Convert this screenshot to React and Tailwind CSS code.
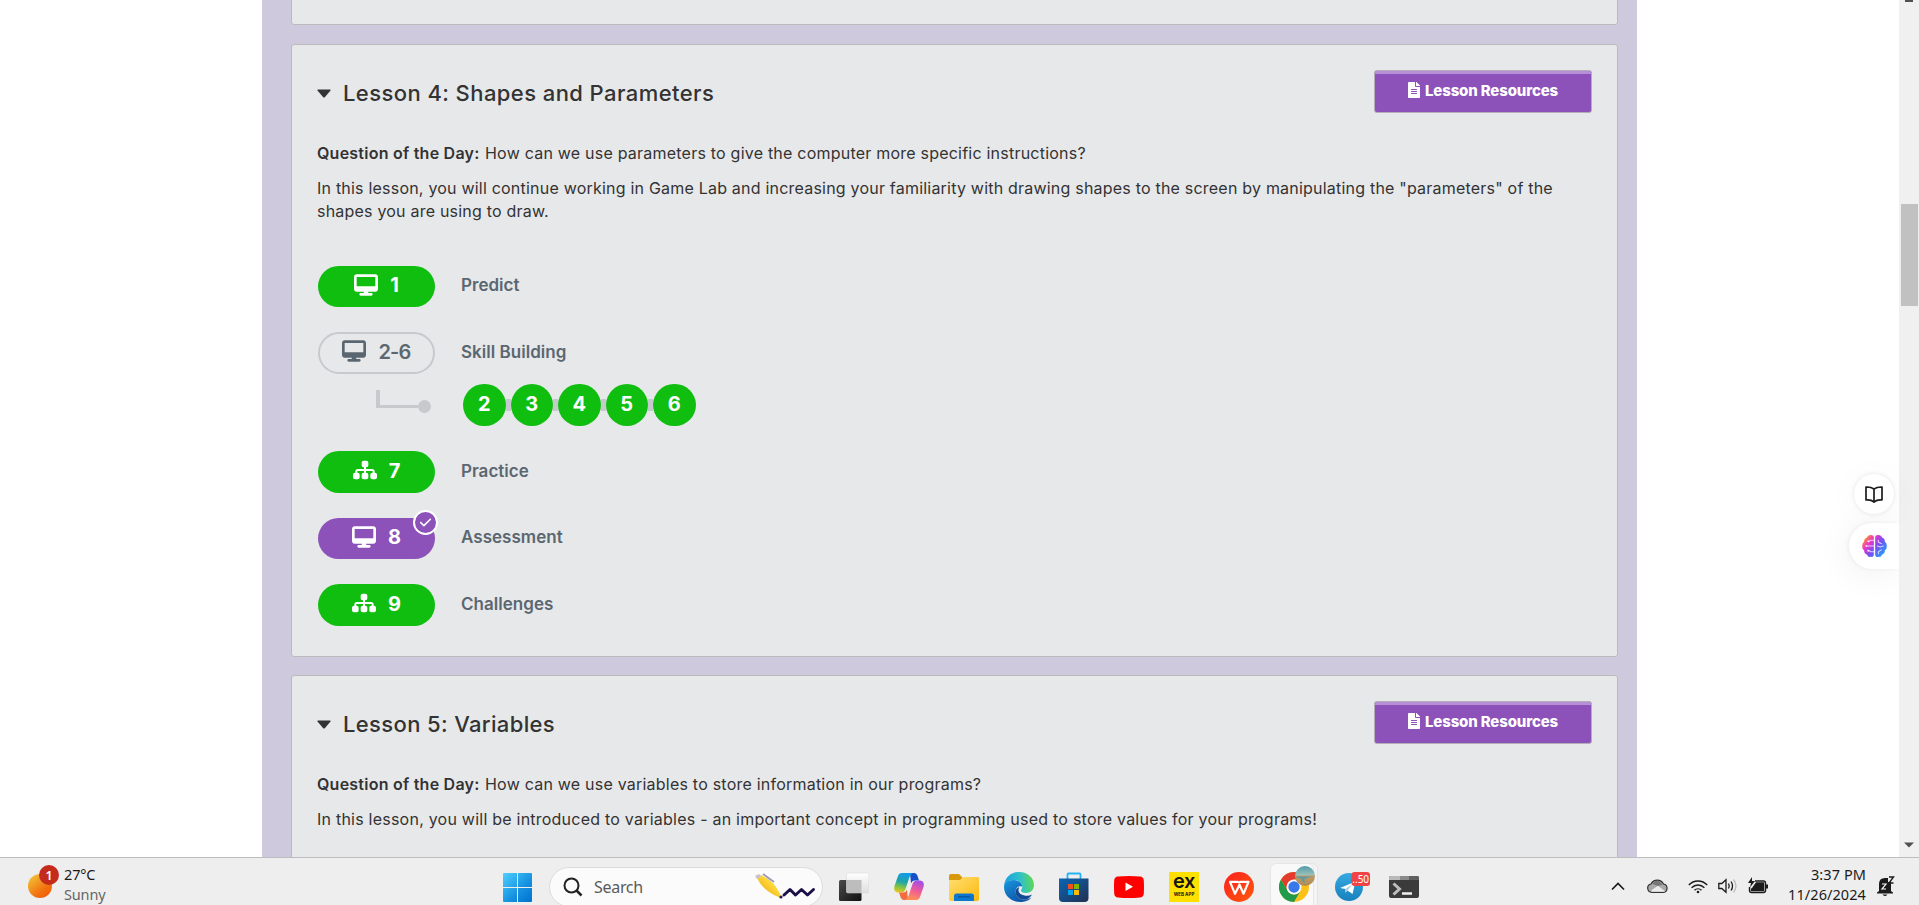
import React from "react";
import { FaDesktop, FaSitemap, FaCheck } from "react-icons/fa6";
import { FaFileAlt } from "react-icons/fa";

const pillIcons = { desktop: FaDesktop, sitemap: FaSitemap };

function Pill({ icon, label, tone, height, assessed }) {
  const Icon = pillIcons[icon];
  return (
    <div className={`relative flex w-[117px] items-center justify-center gap-3 rounded-full pb-1 text-[20px] leading-none ${height} ${tone}`}>
      <Icon className="size-6 shrink-0" />
      <span className="pt-px">{label}</span>
      {assessed && (
        <span className="absolute -right-[3px] -top-2 flex size-[25px] items-center justify-center rounded-full border-[2.5px] border-white bg-[#8c52ba]">
          <FaCheck className="size-[13px] text-white" />
        </span>
      )}
    </div>
  );
}

const green = "bg-[#0fbe0f] font-bold text-white";
const purple = "bg-[#8c52ba] font-bold text-white";
const outline = "border-2 border-[#c6cacd] font-semibold tracking-[-0.8px] text-[#5b6770]";

function LevelRow({ children, name, spacing }) {
  return (
    <div className={`flex items-center gap-[26px] pl-px ${spacing}`}>
      {children}
      <span className="pb-[2px] text-[17px] font-semibold leading-none tracking-[0.03px] text-[#5b6770]">{name}</span>
    </div>
  );
}

function Lesson({ title, titleTrack, question, children, size }) {
  return (
    <section className={`shrink-0 rounded-[3px] border border-[#bbb] bg-[#e7e8ea] px-[25px] pt-[25px] text-[#333] ${size}`}>
      <div className="flex h-[43px] items-start justify-between">
        <h2 className={`flex items-center gap-3 pt-[9px] text-[22px] font-medium leading-[28px] ${titleTrack}`}>
          <svg viewBox="0 0 14 9" className="h-[9px] w-[14px]">
            <path d="M1 .5h12q1.200 0 .5 1L8 7.900q-1 1-2 0L.5 1.500Q-.2.500 1 .5z" fill="currentColor" />
          </svg>
          {title}
        </h2>
        <div className="flex h-[43px] w-[218px] flex-col rounded-[3px] border border-[#b5aeb9] bg-[#8c52ba]">
          <div className="h-[3px] rounded-t-[2px] bg-[#b78fd6]" />
          <div className="flex flex-1 items-center justify-center gap-[5px] pb-[6px] text-[15px] font-extrabold leading-none tracking-[-0.15px] text-white">
            <FaFileAlt className="h-4 w-3" />
            Lesson Resources
          </div>
        </div>
      </div>
      <p className="mt-[29px] whitespace-nowrap text-[16px] leading-[23px] tracking-[0.22px]">
        <strong className="inline-block w-[168px] font-semibold tracking-[0.24px]">Question of the Day: </strong>
        {question}
      </p>
      {children}
    </section>
  );
}

const AppSlot = ({ children }) => <div className="flex size-[30px] shrink-0 items-center justify-center">{children}</div>;

function Taskbar() {
  return (
    <footer className="flex h-12 shrink-0 overflow-hidden border-t border-[#bdbdbd] bg-[#eeeeee] font-['Noto_Sans',sans-serif]">
      <div className="flex w-[503px] pl-7 pt-[7px]">
        <svg viewBox="0 0 32 34" className="h-[34px] w-8 shrink-0">
          <defs>
            <linearGradient id="sun" x1="0" y1="0" x2=".8" y2="1"><stop stopColor="#f2cf3c" /><stop offset=".7" stopColor="#f2720f" /><stop offset="1" stopColor="#f05a05" /></linearGradient>
          </defs>
          <circle cx="12" cy="21" r="12" fill="url(#sun)" />
          <circle cx="21" cy="10" r="10" fill="#c42b1c" />
          <text x="21" y="14.500" textAnchor="middle" fontSize="12.500" fontWeight="600" fill="#fff">1</text>
        </svg>
        <div className="-mt-px ml-1 text-[14.500px] leading-5 tracking-[-0.15px]">
          <div className="text-[#1b1b1b]">27°C</div>
          <div className="text-[#666]">Sunny</div>
        </div>
      </div>

      <div className="flex pt-[14px]">
        <svg viewBox="0 0 29 29" className="mt-px size-[29px]">
          <defs><linearGradient id="win" x1="0" y1="0" x2="1" y2="1"><stop stopColor="#4cd0ff" /><stop offset=".6" stopColor="#1590e0" /><stop offset="1" stopColor="#0072cf" /></linearGradient></defs>
          <path d="M1 0h13v14H0V1q0-1 1-1zM15 0h13q1 0 1 1v13H15zM0 15h14v14H1q-1 0-1-1zM15 15h14v13q0 1-1 1H15z" fill="url(#win)" />
        </svg>
        <div className="-mt-[5px] ml-[17px] flex h-[40px] w-[274px] shrink-0 items-start rounded-full border border-[#dcdcdc] bg-[#fbfbfb] pl-[13px] pt-[9px]">
          <svg viewBox="0 0 20 20" className="size-5" fill="none" stroke="#222" strokeWidth="2">
            <circle cx="8.500" cy="8.500" r="7" /><path d="M13.500 13.500l5 5" strokeWidth="2.500" />
          </svg>
          <span className="-mt-px ml-[11px] text-[16px] leading-[22px] tracking-[-0.3px] text-[#5a5a5a]">Search</span>
          <svg viewBox="0 0 62 26" className="-mt-1 ml-auto mr-[5px] h-[26px] w-[62px]">
            <defs><linearGradient id="pen" x1="0" y1="1" x2="1" y2="0"><stop stopColor="#e09a08" /><stop offset=".6" stopColor="#ffd83a" /><stop offset="1" stopColor="#e0a010" /></linearGradient></defs>
            <path d="M2 5L6 2Q20 8 26 23l-1.500 1.500Q8 18 2 5z" fill="url(#pen)" />
            <path d="M0 3l4-2 2 2-4 3z" fill="#c5bfd8" />
            <path d="M8 1l11 8" stroke="#9d97bd" strokeWidth="1.800" />
            <circle cx="26" cy="24" r="1.600" fill="#2a1b52" />
            <path d="M29 22l6-5.500 5.500 5.500 6-5.500 6 5.500 6-5.500" fill="none" stroke="#1d1147" strokeWidth="3" strokeLinejoin="round" strokeLinecap="round" />
          </svg>
        </div>

        <div className="ml-4 flex gap-[25px]">
          <AppSlot>
            <svg viewBox="0 0 30 30">
              <defs>
                <linearGradient id="tv" x1="0" y1="0" x2="1" y2="1"><stop stopColor="#4a4a4a" /><stop offset="1" stopColor="#111" /></linearGradient>
                <linearGradient id="tl" x1="0" y1="0" x2="0" y2="1"><stop stopColor="#fff" /><stop offset="1" stopColor="#dedede" /></linearGradient>
              </defs>
              <rect y="8" width="22.500" height="21" rx="1.500" fill="url(#tv)" />
              <rect x="7.500" y="1" width="22.300" height="20" rx="1.500" fill="url(#tl)" stroke="#d6d6d6" strokeWidth=".5" />
              <path d="M7.500 8h15v13h-13.500q-1.500 0-1.500-1.500z" fill="#bdbdbd" />
            </svg>
          </AppSlot>
          <AppSlot>
            <svg viewBox="0 0 30 30">
              <defs>
                <linearGradient id="ca" x1=".5" y1="0" x2=".3" y2="1"><stop stopColor="#109be8" /><stop offset=".45" stopColor="#21a5a8" /><stop offset=".75" stopColor="#87c53f" /><stop offset="1" stopColor="#ecc520" /></linearGradient>
                <linearGradient id="cb" x1=".7" y1="0" x2=".4" y2="1"><stop stopColor="#a24bea" /><stop offset=".5" stopColor="#ee5a9a" /><stop offset="1" stopColor="#ff9352" /></linearGradient>
              </defs>
              <path d="M16 1h4q2.500 0 3.500 3l1.500 4.500h-4q-3 0-4 3z" fill="#174ec9" />
              <path d="M8 1h11q-2.500 1-3.500 4l-4 12q-1.200 3.500-4.500 3.500H4Q-1 20 .5 14L4 4q1-3 4-3z" fill="url(#ca)" />
              <path d="M14 28h-4q-2.500 0-3.500-3L5 20.500h4q3 0 4-3z" fill="#f26d42" />
              <path d="M22 28H11q2.500-1 3.500-4l4-12q1.200-3.500 4.500-3.500h3q5 .5 3.500 6.500L26 25q-1 3-4 3z" fill="url(#cb)" />
            </svg>
          </AppSlot>
          <AppSlot>
            <svg viewBox="0 0 30 30">
              <defs><linearGradient id="fo" x1="0" y1="0" x2="1" y2="1"><stop stopColor="#ffdf73" /><stop offset="1" stopColor="#fcb90d" /></linearGradient></defs>
              <path d="M0 4q0-2 2-2h8l3 3v5H0z" fill="#d9970a" />
              <path d="M0 8h11l3-3h15q1 0 1 1v21q0 2-2 2H2q-2 0-2-2z" fill="url(#fo)" />
              <path d="M5 29v-5q0-2.500 2.500-2.500h15Q25 21.500 25 24v5z" fill="#0b78d0" />
              <path d="M9 24.800h12.500" stroke="#07529b" strokeWidth="1.200" />
            </svg>
          </AppSlot>
          <AppSlot>
            <svg viewBox="0 0 30 30">
              <defs>
                <linearGradient id="ea" x1="0" y1=".4" x2="1" y2=".3"><stop stopColor="#1c9fe0" /><stop offset=".55" stopColor="#2fc2c9" /><stop offset="1" stopColor="#63d94a" /></linearGradient>
                <linearGradient id="eb" x1="0" y1="0" x2=".7" y2="1"><stop stopColor="#1897dd" /><stop offset="1" stopColor="#0d4fa4" /></linearGradient>
              </defs>
              <path d="M0 14C1 5 7 0 15 0c9 0 15 6 15 13 0 5-3.500 8-8 8-3.500 0-5-1.200-5-2.500 0-1 1.300-1.500 1.300-4C18.300 11 15 8 10 8 5 8 1 11 0 14z" fill="url(#ea)" />
              <path d="M0 15C0 11 4 8 9.500 8c5 0 8.800 3 8.800 6.500h-.5c-4-1-6.300 2-6.300 5 0 5 5 8.500 10 8 2.500-.3 4-1 6-2C24.500 29 20 30 16 30 7 30 0 23.500 0 15z" fill="url(#eb)" />
              <path d="M11.500 19c-.5 5 4 8.800 10 8.500 3-.3 5-2.500 6.500-5-2 1-4 1.500-6 1.300-6-.5-9-4-6.800-8.600-2 .5-3.500 2-3.700 3.800z" fill="#134992" />
            </svg>
          </AppSlot>
          <AppSlot>
            <svg viewBox="0 0 30 30">
              <defs><linearGradient id="st" x1="0" y1="0" x2="1" y2="1"><stop stopColor="#0a66b8" /><stop offset="1" stopColor="#22304f" /></linearGradient></defs>
              <path d="M8.500 8V2.500q0-1 1-1h11q1 0 1 1V8" fill="none" stroke="#25b3f4" strokeWidth="1.800" />
              <path d="M0 6.500h29.500V26q0 4-4 4H4q-4 0-4-4z" fill="url(#st)" />
              <path d="M9 12h5v5H9z" fill="#f25022" /><path d="M15 12h5v5h-5z" fill="#7fba00" /><path d="M9 18h5v5H9z" fill="#00a4ef" /><path d="M15 18h5v5h-5z" fill="#ffb900" />
            </svg>
          </AppSlot>
          <AppSlot>
            <svg viewBox="0 0 30 30"><path d="M4 4.500q11-1 22 0 3.500.3 3.800 4 .4 6.500 0 13-.3 3.700-3.800 4-11 1-22 0-3.500-.3-3.800-4-.4-6.500 0-13 .3-3.700 3.800-4z" fill="#f00" /><path d="M11.500 10.500l7.500 4.300-7.500 4.300z" fill="#fff" /></svg>
          </AppSlot>
          <AppSlot>
            <div className="flex size-[30px] flex-col items-center bg-[#ffe000] font-['Inter',sans-serif] text-[#141414]">
              <span className="mt-px text-[20px] font-semibold leading-[17px] tracking-tight">ex</span>
              <span className="mt-px whitespace-nowrap text-[4.500px] font-bold leading-[7px]">WEB APP</span>
            </div>
          </AppSlot>
          <AppSlot>
            <svg viewBox="0 0 30 30">
              <defs><linearGradient id="wp" x1="0" y1="0" x2="1" y2="1"><stop stopColor="#fb1f1f" /><stop offset="1" stopColor="#ff5a0c" /></linearGradient></defs>
              <circle cx="15" cy="15" r="15" fill="url(#wp)" />
              <path d="M14.500 9.800H6l5 12 4.500-9 4 9 5-12h-8q-1.500 0-1 1.500" fill="none" stroke="#fff" strokeWidth="2.200" strokeLinejoin="round" />
            </svg>
          </AppSlot>
          <AppSlot>
            <div className="relative size-[30px]">
              <div className="absolute -left-[5px] -top-[9px] h-[46px] w-[44px] rounded-md border border-[#e4e4e4] bg-[#f4f4f4]" />
              <div className="absolute -left-[9px] -top-[9px] h-[46px] w-[44px] rounded-md border border-[#e6e6e6] bg-[#f9f9f9]" />
              <svg viewBox="0 0 36 36" className="absolute left-0 -top-[6px] size-9">
                <defs>
                  <linearGradient id="av" x1="0" y1="0" x2="0" y2="1"><stop stopColor="#4f9cab" /><stop offset=".45" stopColor="#9cc0b8" /><stop offset=".5" stopColor="#c19b66" /><stop offset="1" stopColor="#b08a55" /></linearGradient>
                </defs>
                <circle cx="15" cy="21" r="15" fill="#fbc116" />
                <path d="M2 13.500A15 15 0 0 1 28 13.500H15l-6.500 11.200z" fill="#e33b2e" />
                <path d="M2 13.500l6.500 11.200A7.500 7.500 0 0 0 21.500 24.700L15 36A15 15 0 0 1 2 13.500z" fill="#219a4b" />
                <circle cx="15" cy="21" r="7.500" fill="#fff" /><circle cx="15" cy="21" r="5.700" fill="#3878ea" />
                <circle cx="26" cy="10" r="10" fill="url(#av)" />
                <path d="M17.500 10.500h18q-6 0-10 2.500-1 2 1 4-3-1-4-3 1-2-5-2z" fill="#5e9aa2" />
              </svg>
            </div>
          </AppSlot>
          <AppSlot>
            <svg viewBox="0 0 30 30" className="overflow-visible">
              <defs><linearGradient id="tg" x1="0" y1="0" x2="0" y2="1"><stop stopColor="#36a9e0" /><stop offset="1" stopColor="#1781bd" /></linearGradient></defs>
              <circle cx="15" cy="15" r="14" fill="url(#tg)" />
              <path d="M6 16L21.500 9.500 18.500 22l-5-3.500-2 2V17z" fill="#fff" /><path d="M11.500 17l7-5-5 6.500-2 2z" fill="#a8cce0" />
              <rect x="17.500" width="18.500" height="14" rx="3" fill="#f04444" />
              <text x="26.700" y="10.800" textAnchor="middle" fontSize="10" fill="#fff">..50</text>
            </svg>
          </AppSlot>
          <AppSlot>
            <svg viewBox="0 0 30 30">
              <path d="M2 4h26q2 0 2 2v18q0 2-2 2H2q-2 0-2-2V6q0-2 2-2z" fill="#3b3b3b" />
              <path d="M2 4h9v4H0V6q0-2 2-2z" fill="#b9b9b9" /><path d="M11 4h9v4h-9z" fill="#8a8a8a" /><path d="M20 4h8q2 0 2 2v2H20z" fill="#606060" />
              <path d="M4.500 11.500l6 5.500-6 5.500" fill="none" stroke="#bfbfbf" strokeWidth="3" /><path d="M13 21.500h10" stroke="#f0f0f0" strokeWidth="2.500" />
            </svg>
          </AppSlot>
        </div>
      </div>

      <div className="ml-auto flex pr-[24px] text-[#1b1b1b]">
        <svg viewBox="0 0 14 9" className="mt-6 h-[9px] w-[14px]" fill="none" stroke="#1b1b1b" strokeWidth="1.700"><path d="M1 7.500l6-6 6 6" /></svg>
        <svg viewBox="0 0 21 14" className="ml-[22px] mt-[21px] h-[14px] w-[21px]">
          <path d="M4.800 13.300A4.200 4.200 0 0 1 4 5 7 7 0 0 1 16.500 5 4.200 4.200 0 0 1 16.500 13.300z" fill="#a9a9a9" stroke="#333" strokeWidth="1.200" />
          <path d="M4 12.300q1-2 4-3.500l3-2 7 5.500q-.5.500-1.500.5H5z" fill="#ececec" /><path d="M5 4.800Q8 1 12 2l3.500 3.500-4.500 1.500z" fill="#777" />
        </svg>
        <svg viewBox="0 0 20 15" className="ml-5 mt-[21px] h-[15px] w-5" fill="none" stroke="#1b1b1b" strokeWidth="1.400">
          <path d="M.8 6a12.500 12.500 0 0 1 18.400 0M3.600 8.700a8.900 8.900 0 0 1 12.800 0M6.500 11.300a5 5 0 0 1 7 0" /><circle cx="10" cy="13" r="1.300" fill="#1b1b1b" stroke="none" />
        </svg>
        <svg viewBox="0 0 20 16" className="ml-[10px] mt-[20px] h-4 w-5" fill="none" stroke="#1b1b1b" strokeWidth="1.300">
          <path d="M.8 5.500h3L8 1.800v12.400L3.800 10.500h-3z" /><path d="M10.500 5.500q1.500 2.500 0 5M13 3.500q3 4.500 0 9" /><path d="M15.500 1.500q5 6.500 0 13" stroke="#bbb" />
        </svg>
        <svg viewBox="0 0 20 17" className="ml-[10px] mt-[19px] h-[17px] w-5">
          <path d="M7 4h8.500q2 0 2 2v7.500q0 2-2 2H3.500q-2 0-2-2V10" fill="none" stroke="#1b1b1b" strokeWidth="1.400" />
          <path d="M8 5.300h8.200v9H2.800v-2.500L4 11z" fill="#1b1b1b" /><path d="M18 7.500h2v4h-2z" fill="#1b1b1b" /><path d="M4 0L0 6h3l-1 4.500L7 4H4z" fill="#1b1b1b" />
        </svg>
        <div className="ml-[14px] mt-[6px] w-[84px] whitespace-nowrap text-right text-[14.500px] leading-5 tracking-[0.08px]">
          <div>3:37 PM</div>
          <div>11/26/2024</div>
        </div>
        <svg viewBox="0 0 18 21" className="ml-[11px] mt-[18px] h-[21px] w-[18px]">
          <path d="M2 15V8q0-6 6-6h3v4h3v9l2 1.500v1H0v-1z" fill="#1b1b1b" /><path d="M5.500 18.500h5q-2.500 3-5 0z" fill="#1b1b1b" />
          <path d="M5 8h4l-4 5h4" fill="none" stroke="#fff" strokeWidth="1.200" /><path d="M12 1h4.500L12 7h4.500" fill="none" stroke="#1b1b1b" strokeWidth="1.400" />
        </svg>
      </div>
    </footer>
  );
}

export default function App() {
  return (
    <div className="flex h-[905px] w-[1919px] flex-col overflow-hidden bg-white font-['Inter',sans-serif]">
      <main className="relative flex h-[857px] shrink-0 justify-between overflow-hidden pl-[262px]">
        <div className="flex w-[1375px] flex-col bg-[#cfc9de] pl-[29px] pr-[19px]">
          <div className="-mt-2 mb-[19px] h-[33px] shrink-0 rounded-[3px] border border-[#bbb] bg-[#e7e8ea]" />
          <Lesson
            size="h-[613px]"
            title="Lesson 4: Shapes and Parameters"
            titleTrack="tracking-[0.42px]"
            question="How can we use parameters to give the computer more specific instructions?"
          >
            <p className="mt-3 whitespace-nowrap text-[16px] leading-[23px] tracking-[0.21px]">
              In this lesson, you will continue working in Game Lab and increasing your familiarity with drawing shapes to the screen by manipulating the "parameters" of the<br />
              shapes you are using to draw.
            </p>
            <div className="mt-[43px] flex flex-col">
              <LevelRow name="Predict" spacing="mb-[25px]"><Pill icon="desktop" label="1" tone={green} height="h-[41px]" /></LevelRow>
              <LevelRow name="Skill Building" spacing="mb-[10px]"><Pill icon="desktop" label="2-6" tone={outline} height="h-[42px]" /></LevelRow>
              <div className="mb-[25px] flex h-[42px] items-center">
                <div className="ml-[59px] flex h-[30px] w-[55px] items-start">
                  <div className="h-[18px] w-[42px] border-b-[3px] border-l-4 border-[#c6cacd]" />
                  <div className="mt-[10px] size-[13px] shrink-0 rounded-full bg-[#c6cacd]" />
                </div>
                <div className="ml-8 flex items-center">
                  {[2, 3, 4, 5, 6].map((n) => (
                    <React.Fragment key={n}>
                      {n > 2 && <div className="h-3 w-[5px] bg-[#c6cacd]" />}
                      <div className="flex size-[42.500px] items-center justify-center rounded-full bg-[#0fbe0f] pb-[2px] text-[20px] font-bold leading-none text-white">{n}</div>
                    </React.Fragment>
                  ))}
                </div>
              </div>
              <LevelRow name="Practice" spacing="mb-[25px]"><Pill icon="sitemap" label="7" tone={green} height="h-[42px]" /></LevelRow>
              <LevelRow name="Assessment" spacing="mb-[25px]"><Pill icon="desktop" label="8" tone={purple} height="h-[41px]" assessed /></LevelRow>
              <LevelRow name="Challenges" spacing=""><Pill icon="sitemap" label="9" tone={green} height="h-[42px]" /></LevelRow>
            </div>
          </Lesson>
          <Lesson
            size="mt-[18px] h-[300px]"
            title="Lesson 5: Variables"
            titleTrack="tracking-[0.36px]"
            question="How can we use variables to store information in our programs?"
          >
            <p className="mt-3 whitespace-nowrap text-[16px] leading-[23px] tracking-[0.23px]">
              In this lesson, you will be introduced to variables - an important concept in programming used to store values for your programs!
            </p>
          </Lesson>
        </div>

        <div className="flex w-5 flex-col items-center justify-between bg-[#f0f0f0] pb-[9px]">
          <div className="h-[2px] w-2 bg-[#505050]" />
          <div className="mb-auto mt-[202px] h-[102px] w-[17px] bg-[#c1c1c1]" />
          <svg viewBox="0 0 10 6" className="h-[6px] w-[10px]"><path d="M0 .5h10L5 5.500z" fill="#505050" /></svg>
        </div>

        <div className="absolute right-[25px] top-[474px] flex size-10 items-center justify-center rounded-full bg-white shadow-[0_0_4px_rgba(0,0,0,0.1),0_4px_36px_rgba(0,0,0,0.04)]">
          <svg viewBox="0 0 18 17" className="h-[17px] w-[18px]" fill="none" stroke="#1d1d1d" strokeWidth="1.700" strokeLinejoin="round">
            <path d="M9 3Q6 .8 1 1v13Q6 13.500 9 16q3-2.500 8-2V1Q12 .8 9 3zM9 3v13" />
          </svg>
        </div>
        <div className="absolute right-5 top-[523px] flex h-[46px] w-[50px] items-center rounded-l-full bg-white pl-[13px] shadow-[-1px_0_4px_rgba(0,0,0,0.06),-3px_5px_36px_rgba(0,0,0,0.06)] [clip-path:inset(-60px_0_-60px_-60px)]">
          <svg viewBox="0 0 26 24" className="h-6 w-[25px]">
            <defs><linearGradient id="br" x1="0" y1="0" x2="1" y2=".8"><stop offset=".1" stopColor="#ff9a1f" /><stop offset=".35" stopColor="#ee35c8" /><stop offset=".6" stopColor="#7b4df5" /><stop offset="1" stopColor="#1aa6ff" /></linearGradient></defs>
            <path d="M12.300 2.500V21.500Q11.500 24 8.500 23.300 6 23.500 5.300 21 2 20 2.200 16.500 0 15 .2 12 0 9 2.200 7.500 2 4.500 5 3.200 6 .3 9 .5 11.800.3 12.300 2.500zM13.700 2.500Q14.200.3 17 .5 20 .3 21 3.200 24 4.500 23.800 7.500 26 9 25.800 12 26 15 23.800 16.500 24 20 20.700 21 20 23.500 17.500 23.300 14.500 24 13.700 21.500z" fill="url(#br)" />
            <path d="M12 6H9L7 7.500M12 12H5M12 18H9L7 16.500M17 6v2l3 1.500M22 12l-3 1-3-1M20 16l-3 2v2" fill="none" stroke="#fff" strokeOpacity=".75" strokeWidth="1.100" strokeLinecap="round" />
            <circle cx="6.500" cy="7" r="1" fill="#fff" fillOpacity=".8" /><circle cx="4.500" cy="12" r="1" fill="#fff" fillOpacity=".8" /><circle cx="6.500" cy="17" r="1" fill="#fff" fillOpacity=".8" />
          </svg>
        </div>
      </main>
      <Taskbar />
    </div>
  );
}
